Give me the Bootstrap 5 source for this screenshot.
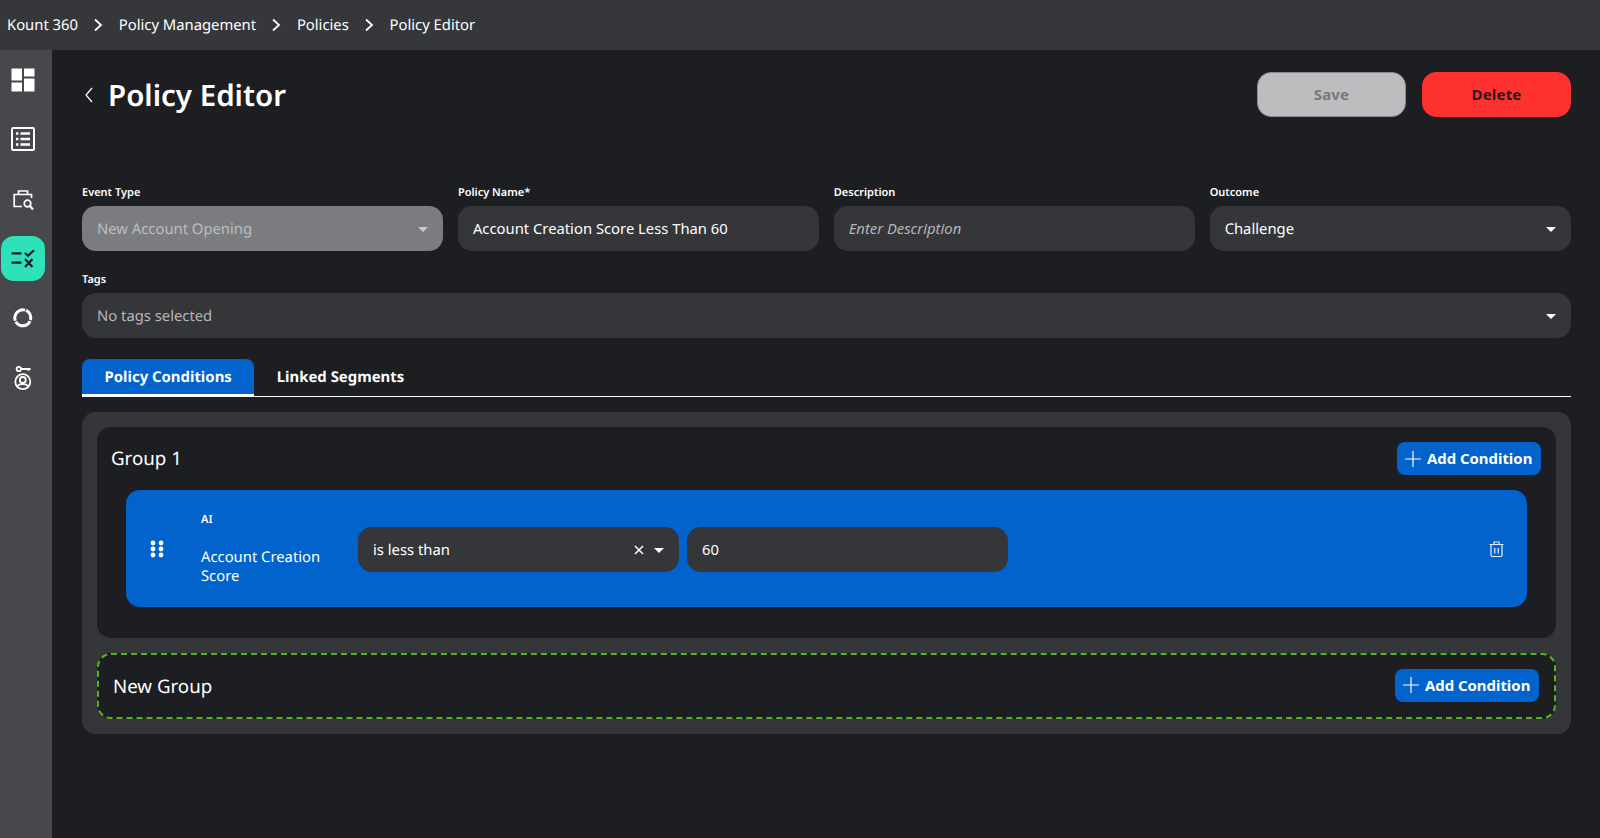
<!DOCTYPE html>
<html lang="en">
<head>
<meta charset="utf-8">
<title>Policy Editor</title>
<link href="https://cdn.jsdelivr.net/npm/bootstrap@5.3.0/dist/css/bootstrap.min.css" rel="stylesheet">
<style>
html, body { height: 100%; }
body { background: #1d1e22; color: #fff; font-family: "Noto Sans", "Open Sans", sans-serif; font-size: 14.8px; overflow: hidden; text-rendering: geometricPrecision; }
.topbar { height: 50px; background: #36373b; padding-left: 7px; padding-bottom: 1px; }
.topbar .breadcrumb { --bs-breadcrumb-margin-bottom: 0; --bs-breadcrumb-item-padding-x: 0; font-size: 14.8px; line-height: 20px; }
.topbar .breadcrumb-item { color: #fff; display: flex; align-items: center; }
.topbar .breadcrumb-item::before { display: none; }
.crumb-sep { width: 10px; height: 14px; margin: 0 15.4px; flex: none; }
.shell { height: 788px; }
.siderail { width: 52px; flex: none; background: #47484c; padding-top: 7px; gap: 14.5px; }
.rail-item { width: 44px; height: 45px; margin-left: .5px; border-radius: 13px; color: #fff; display: flex; align-items: center; justify-content: center; }
.rail-item.is-on { background: #2de2b8; color: #1d1e22; }
.rail-item svg { width: 28px; height: 28px; flex: none; }
.workspace { padding: 22px 29.5px 0 30px; min-width: 0; }
.page-title { font-size: 29.5px; font-weight: 600; line-height: 45px; margin: 0; }
.back-chev { width: 12px; height: 20px; margin: 0 13px 0 1px; }
.btn-act { width: 149px; height: 45px; border-radius: 14px; font-size: 15px; font-weight: 700; padding: 0 0 0 1px; letter-spacing: .2px; }
.btn-save, .btn-save:disabled { background: #bcbdbf; border: 1px solid #8a8b8e; color: #77787c; opacity: 1; }
.btn-del, .btn-del:hover { background: #ff3030; border: 1px solid #ff3030; color: #1d1e22; }
.form-grid { --bs-gutter-x: 15px; margin-top: 68px; }
.field-label { font-size: 11px; font-weight: 600; line-height: 16px; margin-bottom: 5px; display: block; color: #fff; }
.field-box, .field-box:focus { background-color: #35363a; border: 0; border-radius: 14px; height: 45px; color: #fff; font-size: 14.8px; padding: 1px 15px 0; box-shadow: none; display: flex; align-items: center; }
input.field-box, input.field-box:focus { padding: 0 15px 1px; }
.field-box::placeholder { color: #b4b5b8; font-style: italic; opacity: 1; }
.field-box.is-locked { background-color: #7b7c7f; color: #bcbdbf; }
.field-box.is-muted { color: #b4b5b8; }
.caret-down { width: 0; height: 0; border-left: 5px solid transparent; border-right: 5px solid transparent; border-top: 5px solid #fff; flex: none; }
.is-locked .caret-down { border-top-color: #c9cacc; }
.tags-row { margin-top: 21px; }
.tab-row { margin-top: 21px; --bs-nav-tabs-border-width: 0; border-bottom: 1px solid #fff; gap: 0; height: 38px; }
.tab-row .nav-link { border: 0; border-radius: 8px 8px 0 0; color: #fff; font-size: 14.9px; font-weight: 700; height: 38px; padding: 0 22.5px; line-height: 37px; background: transparent; margin: 0; }
.tab-row .nav-link.active { background: #0263cc; color: #fff; border-bottom: 3px solid #fff; }
.cond-panel { margin-top: 15px; background: #35363a; border-radius: 14px; padding: 15px; height: 322px; }
.cond-group { background: #1d1e22; border-radius: 14px; height: 211px; padding: 15px 15px 0 15px; }
.group-name { font-size: 18.7px; line-height: 33px; font-weight: 400; margin: 0 0 0 -1px; }
.btn-add { background: #0263cc; border: 0; color: #fff; border-radius: 8px; height: 33px; width: 144px; padding: 0 0 0 8px; font-size: 14.9px; font-weight: 700; display: flex; align-items: center; justify-content: flex-start; gap: 6.5px; white-space: nowrap; }
.btn-add:hover { background: #0263cc; color: #fff; }
.btn-add svg { width: 16px; height: 16px; flex: none; }
.cond-row { background: #0263cc; border-radius: 14px; height: 117px; margin: 15px 14px 0 14px; padding: 2px 23px 0; }
.drag-dots { width: 14px; height: 18px; flex: none; margin: 0 36px 2px 1px; }
.cond-info { width: 158px; flex: none; padding-top: 20px; height: 100%; padding-left: 1px; }
.cond-src { font-size: 11px; font-weight: 600; line-height: 16px; margin-bottom: 20px; }
.cond-name { font-size: 14.8px; line-height: 19px; width: 130px; }
.cond-op { width: 321px; }
.cond-val { width: 321px; margin-left: 8px; }
.clear-x { width: 10px; height: 10px; margin-right: 10px; flex: none; }
.trash-ic { width: 15px; height: 16px; margin: 0 0 2px auto; flex: none; }
.new-group { margin-top: 15px; height: 66px; border: 2px dashed #52b51e; border-radius: 14px; padding: 0 15px 0 15px; background: #1d1e22; }
.new-group .btn-add { margin-bottom: 2px; }
</style>
</head>
<body>
<nav class="topbar d-flex align-items-center" aria-label="breadcrumb">
  <ol class="breadcrumb">
    <li class="breadcrumb-item">Kount 360<svg class="crumb-sep" viewBox="0 0 10 14" fill="none" stroke="#fff" stroke-width="1.800"><path d="M2 1.500 8 7l-6 5.500"/></svg></li>
    <li class="breadcrumb-item">Policy Management<svg class="crumb-sep" viewBox="0 0 10 14" fill="none" stroke="#fff" stroke-width="1.800"><path d="M2 1.500 8 7l-6 5.500"/></svg></li>
    <li class="breadcrumb-item">Policies<svg class="crumb-sep" viewBox="0 0 10 14" fill="none" stroke="#fff" stroke-width="1.800"><path d="M2 1.500 8 7l-6 5.500"/></svg></li>
    <li class="breadcrumb-item active">Policy Editor</li>
  </ol>
</nav>
<div class="shell d-flex">
  <aside class="siderail d-flex flex-column">
    <a class="rail-item"><svg viewBox="0 0 28 28" fill="#fff"><rect x="2.500" y="2.500" width="10.500" height="12"/><rect x="15" y="2.500" width="10.500" height="8"/><rect x="2.500" y="16.500" width="10.500" height="9"/><rect x="15" y="12.500" width="10.500" height="13"/></svg></a>
    <a class="rail-item"><svg viewBox="0 0 28 28" fill="none" stroke="#fff"><rect x="3" y="3" width="22" height="22" rx="1" stroke-width="2"/><path d="M11.500 8.500h9.500M11.500 14h9.500M11.500 19.500h9.500" stroke-width="2.400"/><path d="M7 8.500h2.400M7 14h2.400M7 19.500h2.400" stroke-width="2.400"/></svg></a>
    <a class="rail-item"><svg viewBox="0 0 28 28" fill="none" stroke="#fff" stroke-width="1.700"><path d="M13 21.500H5.200V9.500h17.300v3.500"/><path d="M9.500 9.500V6h9v3.500"/><circle cx="18.500" cy="18.500" r="3.300"/><path d="m21 21 3 3.500" stroke-width="2.200"/></svg></a>
    <a class="rail-item is-on"><svg viewBox="0 0 28 28" fill="none" stroke="#1d1e22" stroke-width="2.200"><path d="M2.500 9.300h10M2.500 18.700h10"/><path d="m16 9 3 2.700 6-5.500"/><path d="m16 15 7.500 8M23.500 15l-7.500 8"/></svg></a>
    <a class="rail-item"><svg viewBox="0 0 28 28" fill="none" stroke="#fff" stroke-width="3"><circle cx="13.800" cy="13.800" r="8" pathLength="360" stroke-dasharray="82 8 127 8 127 8" transform="rotate(-66 13.800 13.800)"/></svg></a>
    <a class="rail-item"><svg viewBox="0 0 28 28" fill="none" stroke="#fff" stroke-width="1.800"><circle cx="9.800" cy="6" r="2.200"/><path d="M12 6h9.500M19.500 6v1.800" stroke-width="2"/><circle cx="13.800" cy="18.700" r="7.500"/><circle cx="13.800" cy="17" r="3"/><path d="M9 23c1-2.500 8.600-2.500 9.600 0"/></svg></a>
  </aside>
  <main class="workspace flex-grow-1">
    <div class="d-flex align-items-center justify-content-between">
      <div class="d-flex align-items-center">
        <svg class="back-chev" viewBox="0 0 12 20" fill="none" stroke="#fff" stroke-width="1.200"><path d="M9 3 3 10l6 7"/></svg>
        <h1 class="page-title">Policy Editor</h1>
      </div>
      <div class="d-flex gap-3">
        <button class="btn btn-act btn-save" disabled>Save</button>
        <button class="btn btn-act btn-del">Delete</button>
      </div>
    </div>
    <div class="row form-grid">
      <div class="col-3">
        <label class="field-label">Event Type</label>
        <div class="field-box is-locked justify-content-between"><span>New Account Opening</span><span class="caret-down"></span></div>
      </div>
      <div class="col-3">
        <label class="field-label">Policy Name*</label>
        <input class="form-control field-box" value="Account Creation Score Less Than 60">
      </div>
      <div class="col-3">
        <label class="field-label">Description</label>
        <input class="form-control field-box" placeholder="Enter Description">
      </div>
      <div class="col-3">
        <label class="field-label">Outcome</label>
        <div class="field-box justify-content-between"><span>Challenge</span><span class="caret-down"></span></div>
      </div>
    </div>
    <div class="tags-row">
      <label class="field-label">Tags</label>
      <div class="field-box is-muted justify-content-between"><span>No tags selected</span><span class="caret-down"></span></div>
    </div>
    <ul class="nav nav-tabs tab-row">
      <li class="nav-item"><a class="nav-link active" href="#">Policy Conditions</a></li>
      <li class="nav-item"><a class="nav-link" href="#">Linked Segments</a></li>
    </ul>
    <section class="cond-panel">
      <div class="cond-group">
        <div class="d-flex align-items-center justify-content-between">
          <h2 class="group-name">Group 1</h2>
          <button class="btn btn-add"><svg viewBox="0 0 16 16" stroke="#fff" stroke-width="1.200"><path d="M8 0v16M0 8h16"/></svg>Add Condition</button>
        </div>
        <div class="cond-row d-flex align-items-center">
          <svg class="drag-dots" viewBox="0 0 14 18" fill="#fff"><circle cx="3" cy="3" r="2.400"/><circle cx="11" cy="3" r="2.400"/><circle cx="3" cy="9" r="2.400"/><circle cx="11" cy="9" r="2.400"/><circle cx="3" cy="15" r="2.400"/><circle cx="11" cy="15" r="2.400"/></svg>
          <div class="cond-info">
            <div class="cond-src">AI</div>
            <div class="cond-name">Account Creation Score</div>
          </div>
          <div class="field-box cond-op"><span class="flex-grow-1">is less than</span><svg class="clear-x" viewBox="0 0 10 10" stroke="#fff" stroke-width="1.500"><path d="m1 1 8 8M9 1 1 9"/></svg><span class="caret-down"></span></div>
          <input class="form-control field-box cond-val" value="60">
          <svg class="trash-ic" viewBox="0 0 15 16" fill="none" stroke="#e6eefb" stroke-width="1.200"><path d="M.5 3.500h14M5 3.500V1h5v2.500M2 3.500V14a1.500 1.500 0 0 0 1.500 1.500h8A1.500 1.500 0 0 0 13 14V3.500M5.800 7v5.500M9.200 7v5.500"/></svg>
        </div>
      </div>
      <div class="new-group d-flex align-items-center justify-content-between">
        <h2 class="group-name">New Group</h2>
        <button class="btn btn-add"><svg viewBox="0 0 16 16" stroke="#fff" stroke-width="1.200"><path d="M8 0v16M0 8h16"/></svg>Add Condition</button>
      </div>
    </section>
  </main>
</div>
<script src="https://cdn.jsdelivr.net/npm/bootstrap@5.3.0/dist/js/bootstrap.bundle.min.js"></script>
</body>
</html>
